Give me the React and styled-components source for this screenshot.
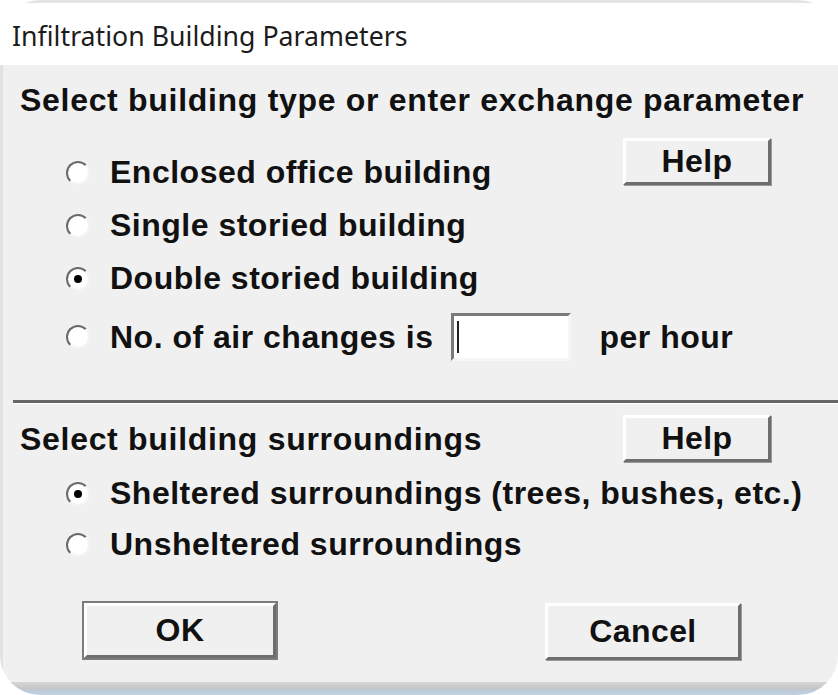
import React from 'react';
import styled, { createGlobalStyle } from 'styled-components';

const GlobalStyle = createGlobalStyle`
  html, body {
    margin: 0;
    padding: 0;
    background: #ffffff;
  }
`;

const Frame = styled.div`
  width: 838px;
  height: 695px;
  display: flex;
  flex-direction: column;
  overflow: hidden;
  border-radius: 40px;
  background: #ffffff;
  font-family: "Liberation Sans", Arial, sans-serif;
  color: #111;
`;

const TitleBar = styled.div`
  height: 65px;
  box-sizing: border-box;
  border-top: 3px solid #e4e4e4;
  background: #ffffff;
  display: flex;
  align-items: center;
  padding: 3px 0 0 12px;
  font-family: "Noto Sans", "Open Sans", sans-serif;
  font-size: 26.7px;
  color: #1c1c1c;
`;

const Body = styled.div`
  flex: 1;
  background: #f0f0f0;
  border-left: 3px solid #e2e2e2;
  display: flex;
  flex-direction: column;
`;

const Section = styled.div`
  display: flex;
  flex-direction: column;
  padding: ${p => p.$pad};
`;

const Heading = styled.div`
  font-weight: bold;
  font-size: 32px;
  line-height: 36px;
  letter-spacing: 0.7px;
  white-space: nowrap;
`;

const HeadRow = styled.div`
  display: flex;
  align-items: center;
  justify-content: space-between;
  padding-right: 67px;
`;

const RadioList = styled.div`
  display: flex;
  flex-direction: column;
  padding: ${p => p.$top || 0}px 67px 0 63px;
`;

const FirstRow = styled.div`
  display: flex;
  align-items: flex-start;
  justify-content: space-between;
`;

const RadioRow = styled.div`
  display: flex;
  align-items: center;
  height: ${p => p.$h}px;
  margin-top: ${p => p.$mt || 0}px;
  gap: 20px;
`;

const RadioCircle = styled.span`
  width: 24px;
  height: 24px;
  border-radius: 50%;
  background: #ffffff;
  box-sizing: border-box;
  border: 2px solid;
  border-color: #6a6a6a #f4f4f4 #f4f4f4 #6a6a6a;
  display: flex;
  align-items: center;
  justify-content: center;
  flex-shrink: 0;

  &::after {
    content: "";
    width: 8px;
    height: 8px;
    border-radius: 50%;
    background: ${p => (p.$on ? '#000' : 'transparent')};
  }
`;

const Label = styled.span`
  font-weight: bold;
  font-size: 32px;
  letter-spacing: 0.5px;
  white-space: nowrap;
`;

const NumberBox = styled.div`
  width: 120px;
  height: 48px;
  box-sizing: border-box;
  margin-left: -2px;
  background: #ffffff;
  border: 3px solid;
  border-color: #7a7a7a #f6f6f6 #f6f6f6 #7a7a7a;
  display: flex;
  align-items: center;
  padding-left: 3px;
  flex-shrink: 0;
`;

const Caret = styled.span`
  width: 2px;
  height: 32px;
  background: #222;
`;

const Unit = styled.span`
  font-weight: bold;
  font-size: 32px;
  letter-spacing: 0.5px;
  margin-left: 8px;
  white-space: nowrap;
`;

const WinButton = styled.button`
  width: ${p => p.$w}px;
  height: ${p => p.$h}px;
  box-sizing: border-box;
  background: #f0f0f0;
  font-family: "Liberation Sans", Arial, sans-serif;
  font-weight: bold;
  font-size: 32px;
  letter-spacing: 0.4px;
  color: #111;
  padding: 0;
  border: 3px solid;
  border-color: #ffffff #6e6e6e #6e6e6e #ffffff;
  box-shadow: ${p => (p.$default ? '0 0 0 2px #7c7c7c' : '1px 1px 0 #9a9a9a')};
  flex-shrink: 0;
`;

const Separator = styled.div`
  height: 3px;
  margin: 31px 0 0 10px;
  background: #666666;
  border-bottom: 1px solid #ffffff;
`;

const ButtonRow = styled.div`
  display: flex;
  justify-content: space-between;
  padding: 33px 97px 0 81px;
`;

const BottomShade = styled.div`
  height: 13px;
  background: linear-gradient(#d6d6d6 0, #c4c4c4 7px, #bccbdb 8px, #c3d0de 13px);
`;

function Radio({ on, label, h, mt, children }) {
  return (
    <RadioRow $h={h} $mt={mt}>
      <RadioCircle $on={on} />
      <Label>{label}</Label>
      {children}
    </RadioRow>
  );
}

export default function App() {
  return (
    <Frame>
      <GlobalStyle />
      <TitleBar>Infiltration Building Parameters</TitleBar>
      <Body>
        <Section $pad="17px 0 0 17px">
          <Heading>Select building type or enter exchange parameter</Heading>
        </Section>
        <RadioList $top={20}>
          <FirstRow>
            <Radio h={53} mt={8} label="Enclosed office building" />
            <WinButton $w={148} $h={47}>Help</WinButton>
          </FirstRow>
          <Radio h={53} label="Single storied building" />
          <Radio h={53} label="Double storied building" on />
          <Radio h={64} label="No. of air changes is">
            <NumberBox><Caret /></NumberBox>
            <Unit>per hour</Unit>
          </Radio>
        </RadioList>
        <Separator />
        <Section $pad="11px 0 0 17px">
          <HeadRow>
            <Heading>Select building surroundings</Heading>
            <WinButton $w={148} $h={47}>Help</WinButton>
          </HeadRow>
        </Section>
        <RadioList $top={6}>
          <Radio h={51} label="Sheltered surroundings (trees, bushes, etc.)" on />
          <Radio h={51} label="Unsheltered surroundings" />
        </RadioList>
        <ButtonRow>
          <WinButton $w={192} $h={55} $default>OK</WinButton>
          <WinButton $w={196} $h={57}>Cancel</WinButton>
        </ButtonRow>
      </Body>
      <BottomShade />
    </Frame>
  );
}
